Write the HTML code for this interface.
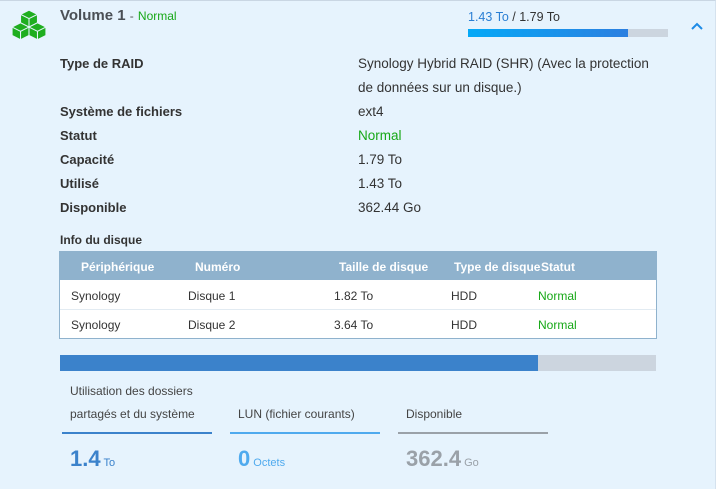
<!DOCTYPE html>
<html><head><meta charset="utf-8"><style>
*{margin:0;padding:0;box-sizing:border-box}
body{width:719px;height:493px;background:#fff;font-family:"Liberation Sans",sans-serif;position:relative;overflow:hidden;color:#333}
.panel{position:absolute;left:0;top:0;width:716px;height:489px;background:#e6f3fd;border-top:1px solid #c9d6e3;border-right:1px solid #d5e2ee}
.a{position:absolute;white-space:nowrap}
.lbl{font-weight:bold;font-size:13px;color:#333}
.val{font-size:13.5px;color:#333}
.th{font-weight:bold;font-size:12px;color:#fff}
.td{font-size:12px;color:#333}
.g{color:#17a817}
</style></head><body>
<div class="panel"></div>
<svg class="a" style="left:11px;top:9px" width="36" height="34" viewBox="0 0 34 32">
<g fill="#1fae1f" stroke="#e6f3fd" stroke-width="1">
<polygon points="17,1 25,5 25,13 17,17 9,13 9,5"/>
<polygon points="9,13 17,17 17,25 9,29 1,25 1,17"/>
<polygon points="25,13 33,17 33,25 25,29 17,25 17,17"/>
</g>
<g stroke="#e6f3fd" stroke-width="1" fill="none"><path d="M9,5 L17,9 L25,5 M17,9 V17 M1,17 L9,21 L17,17 M9,21 V29 M17,17 L25,21 L33,17 M25,21 V29"/></g>
</svg>
<div class="a" style="left:60px;top:7px;font-size:15px;font-weight:bold;color:#4a4f55">Volume 1 <span style="font-weight:normal;font-size:12px;color:#555">-</span> <span style="font-weight:normal;font-size:12px" class="g">Normal</span></div>
<div class="a" style="left:468px;top:10px;font-size:12.5px;color:#333"><span style="color:#2a7fd4">1.43 To</span> / 1.79 To</div>
<div class="a" style="left:468px;top:29px;width:200px;height:8px;background:#ccd5df"></div>
<div class="a" style="left:468px;top:29px;width:160px;height:8px;background:linear-gradient(90deg,#05a9f7,#2c7fe0)"></div>
<svg class="a" style="left:690px;top:21px" width="14" height="10"><path d="M2,8 L7,3 L12,8" stroke="#1e8be6" stroke-width="2" fill="none"/></svg>

<div class="a lbl" style="left:60px;top:56px">Type de RAID</div>
<div class="a val" style="left:358px;top:56px">Synology Hybrid RAID (SHR) (Avec la protection</div>
<div class="a val" style="left:358px;top:80px">de données sur un disque.)</div>
<div class="a lbl" style="left:60px;top:104px">Système de fichiers</div><div class="a val" style="left:358px;top:104px">ext4</div>
<div class="a lbl" style="left:60px;top:128px">Statut</div><div class="a val g" style="left:358px;top:128px">Normal</div>
<div class="a lbl" style="left:60px;top:152px">Capacité</div><div class="a val" style="left:358px;top:152px">1.79 To</div>
<div class="a lbl" style="left:60px;top:176px">Utilisé</div><div class="a val" style="left:358px;top:176px">1.43 To</div>
<div class="a lbl" style="left:60px;top:200px">Disponible</div><div class="a val" style="left:358px;top:200px">362.44 Go</div>

<div class="a" style="left:60px;top:233px;font-size:12px;font-weight:bold;color:#333">Info du disque</div>
<div class="a" style="left:59px;top:251px;width:598px;height:88px;border:1px solid #8fb2cd;background:#fff"></div>
<div class="a" style="left:59px;top:251px;width:598px;height:29px;background:#8fb2cd"></div>
<div class="a" style="left:60px;top:309px;width:596px;height:1px;background:#e2ebf2"></div>
<div class="a th" style="left:81px;top:260px">Périphérique</div>
<div class="a th" style="left:195px;top:260px">Numéro</div>
<div class="a th" style="left:339px;top:260px">Taille de disque</div>
<div class="a th" style="left:454px;top:260px">Type de disque</div>
<div class="a th" style="left:541px;top:260px">Statut</div>
<div class="a td" style="left:71px;top:289px">Synology</div><div class="a td" style="left:188px;top:289px">Disque 1</div><div class="a td" style="left:334px;top:289px">1.82 To</div><div class="a td" style="left:451px;top:289px">HDD</div><div class="a td g" style="left:538px;top:289px">Normal</div>
<div class="a td" style="left:71px;top:318px">Synology</div><div class="a td" style="left:188px;top:318px">Disque 2</div><div class="a td" style="left:334px;top:318px">3.64 To</div><div class="a td" style="left:451px;top:318px">HDD</div><div class="a td g" style="left:538px;top:318px">Normal</div>

<div class="a" style="left:60px;top:355px;width:596px;height:16px;background:#ccd5df"></div>
<div class="a" style="left:60px;top:355px;width:478px;height:16px;background:#3b82cb"></div>

<div class="a" style="left:70px;top:384px;font-size:12px;color:#444">Utilisation des dossiers</div>
<div class="a" style="left:70px;top:407px;font-size:12px;color:#444">partagés et du système</div>
<div class="a" style="left:238px;top:407px;font-size:12px;color:#444">LUN (fichier courants)</div>
<div class="a" style="left:406px;top:407px;font-size:12px;color:#444">Disponible</div>
<div class="a" style="left:62px;top:432px;width:150px;height:2px;background:#3b82cb"></div>
<div class="a" style="left:230px;top:432px;width:150px;height:2px;background:#4faaee"></div>
<div class="a" style="left:398px;top:432px;width:150px;height:2px;background:#9aa1a8"></div>
<div class="a" style="left:70px;top:446px;font-size:22px;font-weight:bold;color:#3b82cb">1.4<span style="font-size:11px;font-weight:normal"> To</span></div>
<div class="a" style="left:238px;top:446px;font-size:22px;font-weight:bold;color:#4faaee">0<span style="font-size:11px;font-weight:normal"> Octets</span></div>
<div class="a" style="left:406px;top:446px;font-size:22px;font-weight:bold;color:#9aa1a8">362.4<span style="font-size:11px;font-weight:normal"> Go</span></div>
</body></html>
